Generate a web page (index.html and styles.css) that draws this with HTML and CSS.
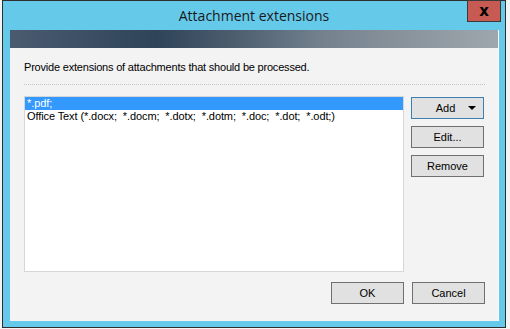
FILE: index.html
```html
<!DOCTYPE html>
<html lang="en">
<head>
  <meta charset="UTF-8" />
  <title>Attachment extensions</title>
  <link rel="stylesheet" href="styles.css">
</head>
<body>
  <div class="window">
    <div class="titlebar">
      <span></span>
      <h1 class="title">Attachment extensions</h1>
      <button class="close-btn">x</button>
    </div>

    <div class="client">
      <div class="banner"></div>

      <div class="content">
        <p class="intro">Provide extensions of attachments that should be processed.</p>
        <div class="separator"></div>

        <div class="main-row">
          <ul class="ext-list">
            <li class="selected">*.pdf;</li>
            <li>Office Text (*.docx;&nbsp; *.docm;&nbsp; *.dotx;&nbsp; *.dotm;&nbsp; *.doc;&nbsp; *.dot;&nbsp; *.odt;)</li>
          </ul>

          <!-- side buttons -->
          <div class="side-buttons">
            <button class="btn btn-default add-btn">Add <span class="caret"></span></button>
            <button class="btn">Edit...</button>
            <button class="btn">Remove</button>
          </div>
        </div>

        <div class="footer">
          <button class="btn">OK</button>
          <button class="btn">Cancel</button>
        </div>
      </div>
    </div>
  </div>
</body>
</html>
```

FILE: styles.css
```css
body {
  margin: 0;
  background: #f4f4f4;
  font-family: "Liberation Sans", Arial, sans-serif;
  font-size: 11px;
}

.window {
  margin-left: 2px;
  width: 502px;
  height: 326px;
  border: 1px solid #2e2e2e;
  background: #65c9ea;
  display: flex;
  flex-direction: column;
}

.titlebar {
  height: 29px;
  display: grid;
  grid-template-columns: 1fr auto 1fr;
  align-items: start;
}

.title {
  margin: 0;
  padding-top: 5px;
  font-family: "Open Sans", "Noto Sans", sans-serif;
  font-size: 14px;
  font-weight: normal;
  color: #1a1a1a;
  line-height: 19px;
}

.close-btn {
  justify-self: end;
  margin: -1px 4px 0 0;
  width: 34px;
  height: 22px;
  padding: 0;
  border: 1px solid #3a3a3a;
  background: #c75a52;
  color: #000;
  font-family: "DejaVu Sans", sans-serif;
  font-size: 15px;
  font-weight: bold;
  line-height: 16px;
}

.client {
  margin: 0 6px 6px 7px;
  flex: 1;
  background: #f3f3f3;
  border-right: 1px solid #fff;
  display: flex;
  flex-direction: column;
}

.banner {
  height: 18px;
  background: linear-gradient(90deg, #4a5b70 0%, #2f4459 30%, #4b5c6e 45%, #76838f 65%, #8d979f 85%, #9ea7ae 100%);
}

.content {
  flex: 1;
  padding: 0 13px 0 14px;
  display: flex;
  flex-direction: column;
}

.intro {
  margin: 13px 0 0;
  line-height: 13px;
  letter-spacing: -0.2px;
  color: #000;
}

.separator {
  margin-top: 10px;
  border-top: 1px dotted #c4c4c4;
}

.main-row {
  margin-top: 11px;
  display: flex;
  gap: 7px;
}

.ext-list {
  margin: 0;
  padding: 0;
  list-style: none;
  width: 378px;
  height: 174px;
  border: 1px solid #d6d6d6;
  background: #fff;
}

.ext-list li {
  height: 13px;
  line-height: 13px;
  padding-left: 2px;
  letter-spacing: -0.1px;
  color: #000;
  white-space: nowrap;
}

.ext-list li.selected {
  background: #3399ff;
  color: #fff;
}

.side-buttons {
  display: flex;
  flex-direction: column;
  gap: 7px;
  padding-top: 1px;
}

.btn {
  width: 73px;
  height: 22px;
  padding: 0;
  border: 1px solid #707070;
  background: #e1e1e1;
  font-family: "Liberation Sans", Arial, sans-serif;
  font-size: 11px;
  color: #000;
}

.btn-default {
  border-color: #3c7fb1;
}

.add-btn {
  position: relative;
  padding-right: 4px;
}

.caret {
  position: absolute;
  right: 7px;
  top: 8px;
  border-left: 4px solid transparent;
  border-right: 4px solid transparent;
  border-top: 4px solid #000;
}

.footer {
  margin-top: 10px;
  display: flex;
  justify-content: flex-end;
  gap: 8px;
}
```
